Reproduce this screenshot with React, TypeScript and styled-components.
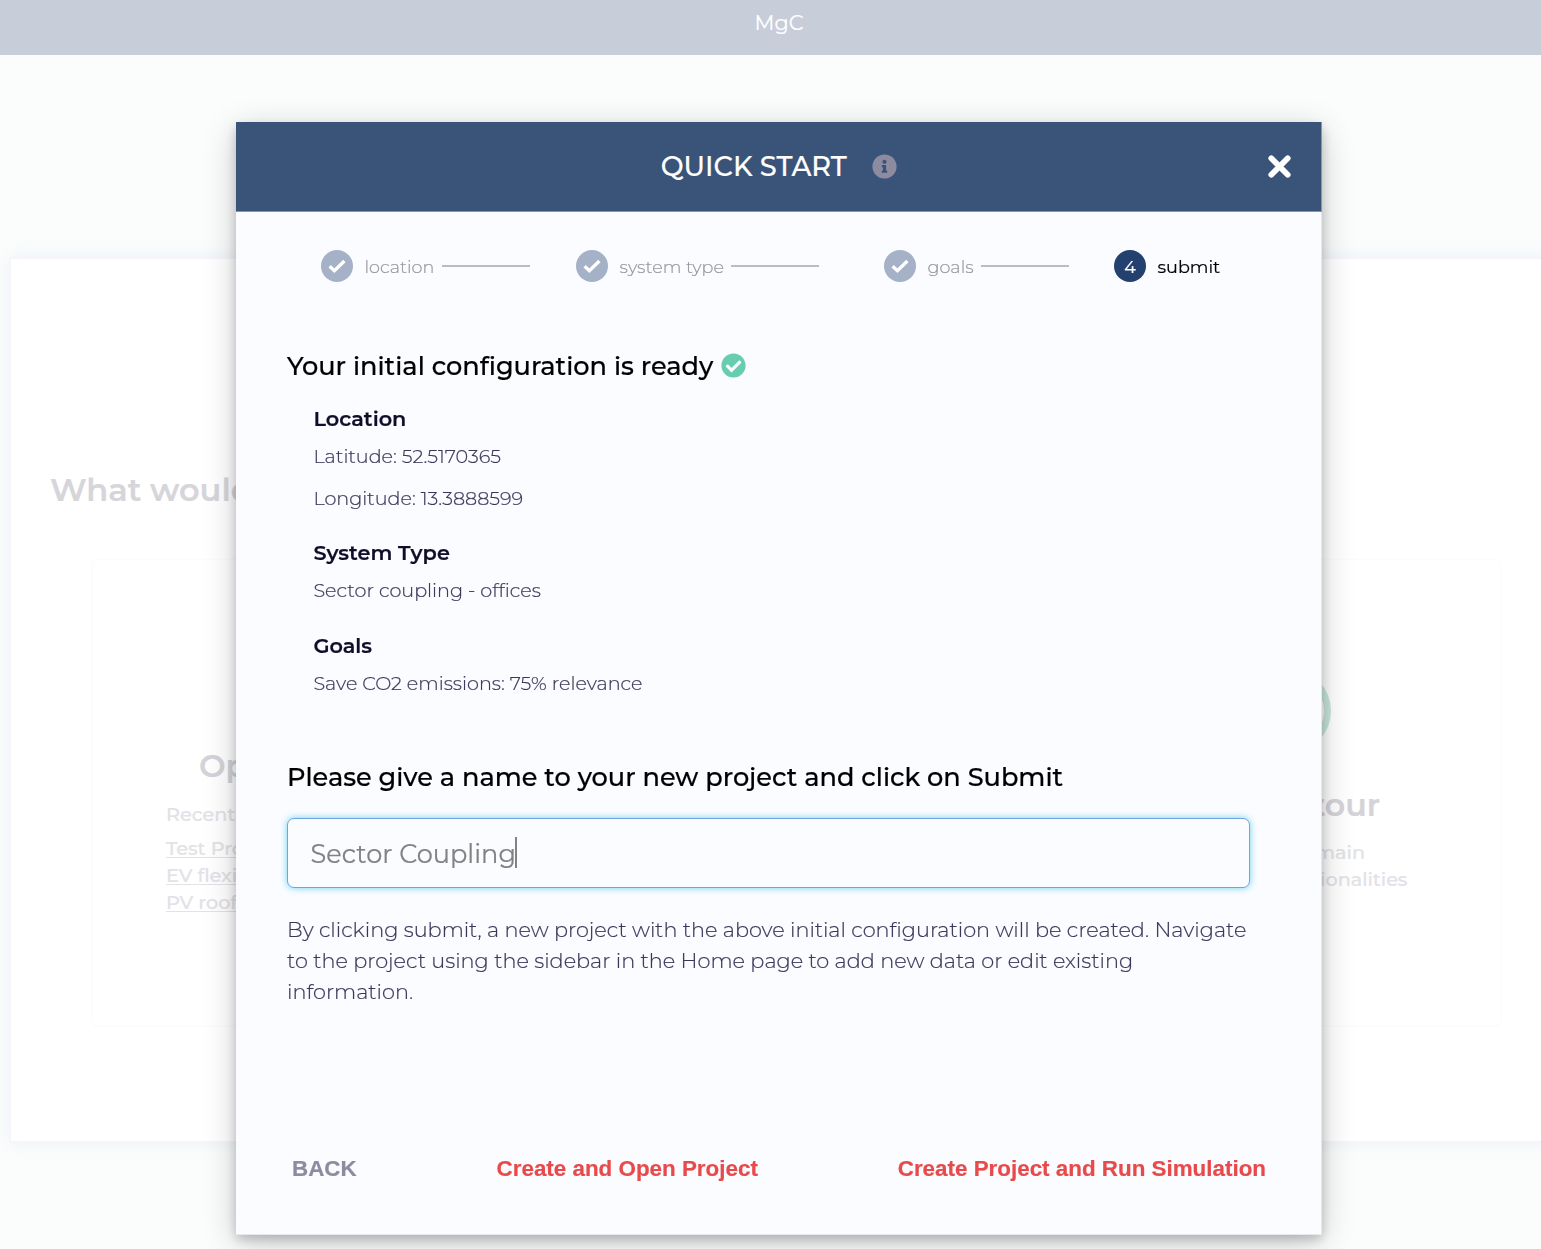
import React from "react";
import styled, { createGlobalStyle } from "styled-components";
import { FaCheckCircle, FaInfoCircle } from "react-icons/fa";

const GlobalStyle = createGlobalStyle`
  * { box-sizing: border-box; }
  html, body { margin: 0; height: 100%; overflow: hidden; }
  body {
    background: #fbfdfc;
    font-family: Montserrat, Inter, "Open Sans", sans-serif;
  }
  p, h1, h2, h3, h4, ul { margin: 0; padding: 0; }
`;

/* Dimmed page behind the dialog */
const Page = styled.div`
  height: 1249px;
  overflow: hidden;
  -webkit-text-stroke-width: 0.2px;
`;

const TopBar = styled.header`
  height: 55px;
  padding: 7px 0 0 17px;
  background: #c8cdda;
  color: #fff;
  text-align: center;
  font-size: 20.8px;
  font-weight: 400;
  line-height: 32px;
`;

const Welcome = styled.main`
  height: 882px;
  margin: 204px -20px 0 11px;
  padding: 210px 61px 0 39px;
  background: #fff;
  box-shadow: 0 0 16px 3px rgba(225, 228, 245, 0.42);
`;

const WelcomeTitle = styled.h1`
  font-size: 32px;
  font-weight: 600;
  line-height: 42px;
  color: #d6d5da;
`;

const Cards = styled.div`
  display: grid;
  grid-template-columns: repeat(3, 422px);
  justify-content: space-between;
  margin: 49px 0 0 43px;
`;

const Card = styled.section`
  height: 465px;
  border-radius: 5px;
  box-shadow: 0 0 3px 1px rgba(0, 0, 0, 0.022);
`;

const ProjectCard = styled(Card)`
  padding: 185px 0 0 73px;
`;

const TourCard = styled(Card)`
  display: flex;
  flex-direction: column;
  align-items: flex-end;
  padding-top: 109px;
`;

const CardTitle = styled.h2<{ $indent?: number; $inset?: number }>`
  padding: 0 ${(p) => p.$inset ?? 0}px 0 ${(p) => p.$indent ?? 0}px;
  font-size: 31.6px;
  font-weight: 600;
  line-height: 42px;
  color: #d4d3d9;
`;

const CardText = styled.p<{ $inset?: number }>`
  padding-right: ${(p) => p.$inset ?? 0}px;
  font-size: 19.2px;
  font-weight: 500;
  line-height: 27px;
  color: #e2e2e7;
`;

const RecentLabel = styled(CardText)`
  margin: 14px 0 7px;
`;

const RecentLink = styled(CardText)`
  text-decoration: underline;
  text-decoration-thickness: 1px;
  text-underline-offset: 2px;
`;

const TourText = styled.div`
  display: flex;
  flex-direction: column;
  align-items: flex-end;
  margin-top: 13px;
`;

const Ring = styled.div`
  width: 84px;
  height: 84px;
  margin: 0 169px 31px 0;
  border: 7px solid #c9e8dd;
  border-radius: 50%;
`;

/* Dialog */
const Overlay = styled.div`
  position: fixed;
  inset: 0;
  padding: 122px 0 0 236px;
`;

const Dialog = styled.div`
  display: flex;
  flex-direction: column;
  width: 1086px;
  height: 1112.5px;
  background: #fbfcff;
  box-shadow: 0 5.3px 10.7px rgba(0, 0, 0, 0.2), 0 8px 32px rgba(0, 0, 0, 0.2);
  -webkit-text-stroke-width: 0.2px;
`;

const DialogHeader = styled.div`
  display: grid;
  grid-template-columns: 1fr auto 1fr;
  align-items: center;
  height: 90px;
  padding: 0 30px 1px;
  background: #3a5378;
  border: 1px solid #8796af;
  border-width: 0 1px 1px 0;
`;

const DialogTitle = styled.h2`
  grid-column: 2;
  display: flex;
  align-items: center;
  gap: 25.5px;
  padding: 2px 0 0 1px;
  font-size: 27.2px;
  font-weight: 500;
  line-height: 36px;
  color: #fff;
`;

const InfoIcon = styled(FaInfoCircle)`
  width: 25px;
  height: 25px;
  margin-bottom: 2px;
  color: #8c8ba0;
`;

const CloseButton = styled.button`
  justify-self: end;
  display: flex;
  padding: 0;
  border: 0;
  background: none;
`;

const DialogBody = styled.div`
  flex: 1;
  display: flex;
  flex-direction: column;
  padding: 38px 55px 48px 51px;
  border: 1px solid #e6e8ec;
  border-width: 0 1px 1px 0;
`;

const Steps = styled.ol`
  display: flex;
  margin: 0 0 67px;
  padding: 0 0 0 34px;
  list-style: none;
`;

const Step = styled.li<{ $after: number; $active?: boolean }>`
  display: flex;
  align-items: center;
  height: 32px;
  margin-right: ${(p) => p.$after}px;
  color: ${(p) => (p.$active ? "#000" : "#97989a")};
`;

const StepMark = styled.span<{ $active?: boolean }>`
  display: flex;
  align-items: center;
  justify-content: center;
  width: 32px;
  height: 32px;
  margin-right: 11.5px;
  padding-top: ${(p) => (p.$active ? 2 : 0)}px;
  border-radius: 50%;
  background: ${(p) => (p.$active ? "#24406e" : "#a4b1c7")};
  color: #fff;
  font-size: 17.6px;
  font-weight: 400;
  line-height: 30px;
`;

const StepLabel = styled.span<{ $width: number; $active?: boolean }>`
  width: ${(p) => p.$width}px;
  padding-top: 1px;
  font-size: 17.6px;
  font-weight: ${(p) => (p.$active ? 400 : 300)};
  line-height: 34px;
  white-space: nowrap;
`;

const StepLine = styled.span`
  width: 88px;
  height: 1.5px;
  margin-left: 8px;
  background: #bbbcbe;
`;

const Heading = styled.h3`
  display: flex;
  align-items: center;
  gap: 7.5px;
  font-size: 25.6px;
  font-weight: 500;
  line-height: 34px;
  color: #000;
`;

const ReadyIcon = styled(FaCheckCircle)`
  width: 25px;
  height: 25px;
  margin-bottom: 2px;
  color: #68cdae;
`;

const Summary = styled.div`
  display: flex;
  flex-direction: column;
  gap: 19.4px;
  margin: 21px 0 56.2px;
  padding-left: 26.4px;
`;

const Label = styled.h4`
  margin-bottom: 1px;
  font-size: 20.8px;
  font-weight: 600;
  line-height: 30px;
  color: #100c2a;
`;

const Value = styled.p`
  font-size: 19.2px;
  font-weight: 300;
  line-height: 42px;
  color: #3a3759;
`;

const NameField = styled.div`
  display: flex;
  align-items: center;
  width: 963px;
  height: 70px;
  margin-top: 24px;
  padding: 1px 23px 0 22.5px;
  border: 1px solid #71a3dc;
  border-radius: 7px;
  background: #fbfcff;
  box-shadow: 0 0 7px rgba(81, 203, 238, 0.85);
  font-size: 25.6px;
  color: #828282;
`;

const Caret = styled.span`
  width: 2px;
  height: 31px;
  margin: 0 0 2px -0.5px;
  background: #828282;
`;

const Hint = styled.p`
  width: 975px;
  margin-top: 26px;
  font-size: 20.82px;
  font-weight: 300;
  line-height: 31px;
  color: #3a3759;
`;

const Actions = styled.div`
  display: flex;
  justify-content: space-between;
  margin-top: auto;
  padding-left: 5px;
`;

const Action = styled.button<{ $muted?: boolean }>`
  padding: 0;
  border: 0;
  background: none;
  font-family: "Liberation Sans", Arial, sans-serif;
  font-size: 22.4px;
  font-weight: 700;
  line-height: 34px;
  color: ${(p) => (p.$muted ? "#8c8ba0" : "#e84a4b")};
`;

const StepCheck = () => (
  <svg width="20" height="16" viewBox="0 0 20 16" fill="none">
    <path d="M2.6 8.2 7.4 12.8 17.4 3" stroke="#fff" strokeWidth="3.3" strokeLinejoin="miter" />
  </svg>
);

const CloseIcon = () => (
  <svg width="23" height="23" viewBox="0 0 23 23">
    <path d="M3.3 3.3 19.7 19.7M19.7 3.3 3.3 19.7" stroke="#fff" strokeWidth="5.8" strokeLinecap="round" />
  </svg>
);

const doneSteps = [
  { name: "location", width: 69.5, after: 46 },
  { name: "system type", width: 103.5, after: 65 },
  { name: "goals", width: 45.5, after: 45 },
];

const summary = [
  { label: "Location", values: ["Latitude: 52.5170365", "Longitude: 13.3888599"] },
  { label: "System Type", values: ["Sector coupling - offices"] },
  { label: "Goals", values: ["Save CO2 emissions: 75% relevance"] },
];

export default function App() {
  return (
    <>
      <GlobalStyle />
      <Page>
        <TopBar>MgC</TopBar>
        <Welcome>
          <WelcomeTitle>What would</WelcomeTitle>
          <Cards>
            <ProjectCard>
              <CardTitle $indent={33}>Open</CardTitle>
              <RecentLabel>Recent</RecentLabel>
              <RecentLink as="a">Test Project</RecentLink>
              <br />
              <RecentLink as="a">EV flexibility</RecentLink>
              <br />
              <RecentLink as="a">PV rooftop</RecentLink>
            </ProjectCard>
            <Card />
            <TourCard>
              <Ring />
              <CardTitle $inset={120}>tour</CardTitle>
              <TourText>
                <CardText $inset={135}>main</CardText>
                <CardText $inset={92.5}>functionalities</CardText>
              </TourText>
            </TourCard>
          </Cards>
        </Welcome>
      </Page>

      <Overlay>
        <Dialog>
          <DialogHeader>
            <DialogTitle>
              QUICK START
              <InfoIcon />
            </DialogTitle>
            <CloseButton aria-label="Close">
              <CloseIcon />
            </CloseButton>
          </DialogHeader>
          <DialogBody>
            <Steps>
              {doneSteps.map((s) => (
                <Step key={s.name} $after={s.after}>
                  <StepMark>
                    <StepCheck />
                  </StepMark>
                  <StepLabel $width={s.width}>{s.name}</StepLabel>
                  <StepLine />
                </Step>
              ))}
              <Step $after={0} $active>
                <StepMark $active>4</StepMark>
                <StepLabel $width={64} $active>submit</StepLabel>
              </Step>
            </Steps>

            <Heading>
              Your initial configuration is ready
              <ReadyIcon />
            </Heading>
            <Summary>
              {summary.map((group) => (
                <div key={group.label}>
                  <Label>{group.label}</Label>
                  {group.values.map((v) => (
                    <Value key={v}>{v}</Value>
                  ))}
                </div>
              ))}
            </Summary>

            <Heading>Please give a name to your new project and click on Submit</Heading>
            <NameField>
              Sector Coupling
              <Caret />
            </NameField>
            <Hint>
              By clicking submit, a new project with the above initial configuration will be created.
              Navigate to the project using the sidebar in the Home page to add new data or edit existing
              information.
            </Hint>

            <Actions>
              <Action $muted>BACK</Action>
              <Action>Create and Open Project</Action>
              <Action>Create Project and Run Simulation</Action>
            </Actions>
          </DialogBody>
        </Dialog>
      </Overlay>
    </>
  );
}
